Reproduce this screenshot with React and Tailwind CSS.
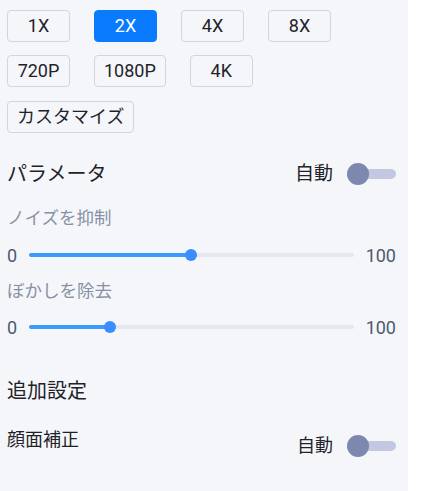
import React from 'react';

const font = "font-['Roboto','Noto_Sans_CJK_JP',sans-serif]";

function OptionButton({ label, active }) {
  return <button className={`h-[32px] min-w-[63px] px-[9px] rounded-[4px] border text-[18px] leading-none ${active ? 'bg-[#0a7aff] border-[#0a7aff] text-white' : 'bg-transparent border-[#d2d5db] text-[#1f2329]'}`}>
      {label}
    </button>;
}

function AutoToggle({ big }) {
  return <div className="flex items-center gap-[14px]">
      <span className={`${big ? 'text-[19px]' : 'text-[18px]'} leading-[24px] text-[#1f2329]`}>自動</span>
      <div className="relative w-[49px] h-[22px] flex items-center">
        <div className="w-full h-[10px] rounded-full bg-[#c3c8e0]"></div>
        <div className="absolute left-0 top-0 w-[22px] h-[22px] rounded-full bg-[#7c88ad]"></div>
      </div>
    </div>;
}

function RangeRow({ value }) {
  return <div className="flex items-center h-[24px] text-[18px] text-[#4e5a6e]">
      <span>0</span>
      <div className="relative flex-1 mx-[12px] h-[4px] rounded-full bg-[#e4e7ee]">
        <div className="h-full rounded-full bg-[#3d9bff]" style={{ width: `${value}%` }}></div>
        <div className="absolute top-1/2 w-[12px] h-[12px] -ml-[6px] -mt-[6px] rounded-full bg-[#3a8cff]" style={{ left: `${value}%` }}></div>
      </div>
      <span>100</span>
    </div>;
}

export default function App() {
  return <div className={`w-[421px] h-[491px] bg-white flex ${font}`}>
      <div className="w-[408px] h-full bg-[#f5f6fa] pl-[7px] pr-[12px] pt-[10px]">
        <div className="flex gap-[24px]">
          <OptionButton label="1X" />
          <OptionButton label="2X" active />
          <OptionButton label="4X" />
          <OptionButton label="8X" />
        </div>
        <div className="flex gap-[24px] mt-[13px]">
          <OptionButton label="720P" />
          <OptionButton label="1080P" />
          <OptionButton label="4K" />
        </div>
        <div className="flex mt-[14px]">
          <OptionButton label="カスタマイズ" />
        </div>

        {/* パラメータ */}
        <div className="flex items-center justify-between h-[28px] mt-[27px]">
          <span className="text-[20px] leading-[28px] text-[#1f2329]">パラメータ</span>
          <AutoToggle big />
        </div>
        <div className="mt-[18px] text-[17.5px] leading-[24px] text-[#8791a5]">ノイズを抑制</div>
        <div className="mt-[13px]">
          <RangeRow value={50} />
        </div>
        <div className="mt-[12px] text-[17.5px] leading-[24px] text-[#8791a5]">ぼかしを除去</div>
        <div className="mt-[12px]">
          <RangeRow value={25} />
        </div>

        {/* 追加設定 */}
        <div className="mt-[38px] text-[20px] leading-[28px] text-[#1f2329]">追加設定</div>
        <div className="flex items-start justify-between mt-[23px]">
          <span className="text-[18px] leading-[24px] text-[#1f2329]">顔面補正</span>
          <div className="mt-[6px]">
            <AutoToggle />
          </div>
        </div>
      </div>
    </div>;
}
